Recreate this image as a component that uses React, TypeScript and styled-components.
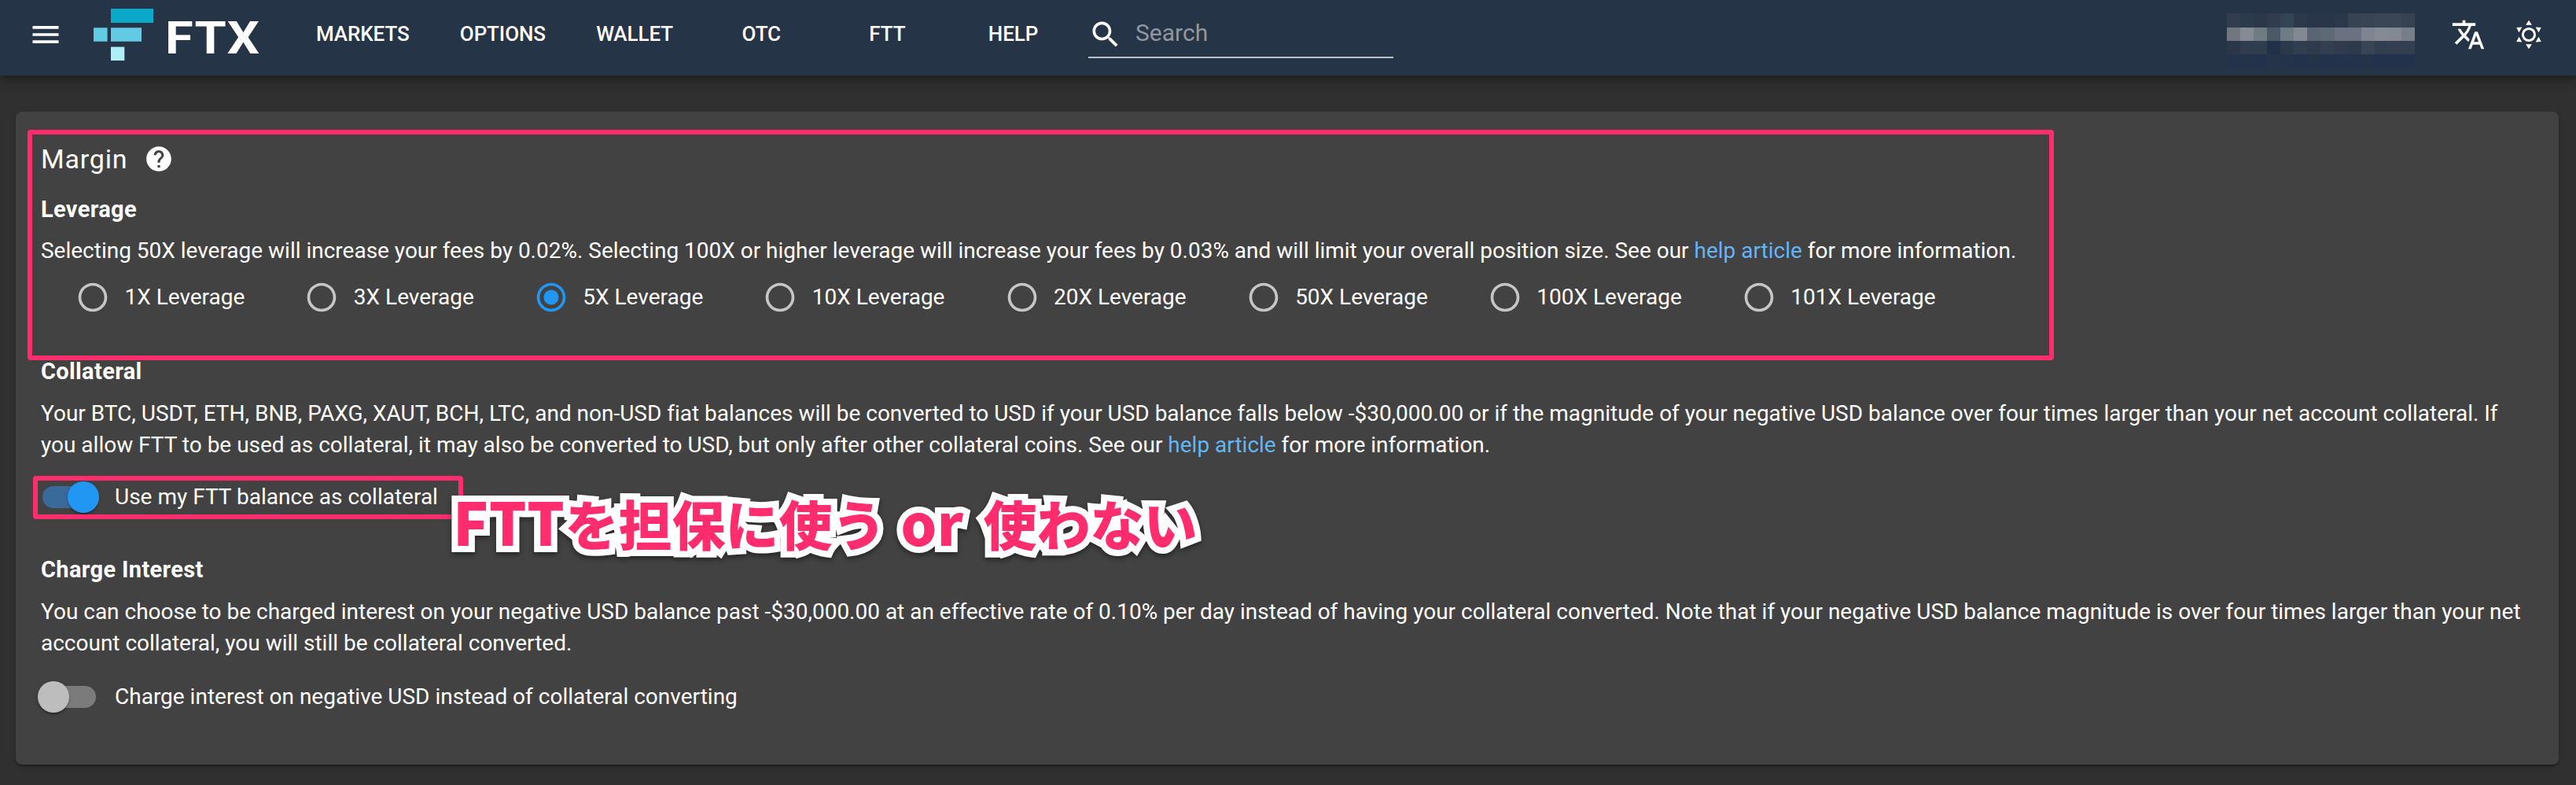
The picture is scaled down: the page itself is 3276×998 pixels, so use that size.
import React, { useState } from 'react';
import styled, { createGlobalStyle } from 'styled-components';

const GlobalStyle = createGlobalStyle`
  * {
    box-sizing: border-box;
  }

  body {
    margin: 0;
    background: #303030;
    color: #fff;
    font-family: Roboto, 'Noto Sans CJK JP', sans-serif;
    font-size: 28px;
    line-height: 40px;
  }
`;

const Page = styled.div`
  min-height: 998px;
  padding-bottom: 26px;
`;

/* ---------- header ---------- */

const Header = styled.header`
  display: flex;
  align-items: center;
  height: 96px;
  padding: 0 38px 8px 36px;
  background: #263447;
  box-shadow: 0 4px 8px -2px rgba(0, 0, 0, 0.2), 0 8px 10px rgba(0, 0, 0, 0.14),
    0 2px 20px rgba(0, 0, 0, 0.12);
`;

const Icon = styled.svg<{ $size?: number }>`
  flex: none;
  display: block;
  width: ${({ $size }) => $size || 44}px;
  height: ${({ $size }) => $size || 44}px;
  fill: currentColor;
`;

const Logo = styled.div`
  display: flex;
  align-items: center;
  margin: 0 56px 0 39px;
`;

const LogoMark = styled.svg`
  display: block;
  width: 76px;
  height: 66px;
`;

const LogoText = styled.div`
  width: 120px;
  margin: 9px 0 0 15px;
  font-size: 57px;
  font-weight: 700;
  line-height: 60px;
  letter-spacing: 1px;
  transform: scaleX(1.14);
  transform-origin: left;
`;

const Nav = styled.nav`
  display: flex;
  gap: 32.2px;
  margin-right: 31.5px;
`;

const NavItem = styled.a`
  min-width: 128px;
  padding: 0 16px 2px;
  text-align: center;
  font-size: 26px;
  font-weight: 500;
  letter-spacing: -0.1px;
`;

const Search = styled.label`
  display: flex;
  align-items: center;
  width: 388px;
  height: 58px;
  margin-top: 2px;
  border-bottom: 2px solid #bcc1c7;
`;

const SearchInput = styled.input`
  width: 300px;
  margin-left: 16px;
  padding: 0 0 5px;
  border: 0;
  outline: 0;
  background: none;
  color: #fff;
  font: 400 30px/40px Roboto, sans-serif;

  &::placeholder {
    color: #8f97a2;
    opacity: 1;
  }
`;

const HeaderRight = styled.div`
  display: flex;
  align-items: center;
  margin-left: auto;
`;

const ThemeToggle = styled(Icon)`
  margin-left: 33px;
`;

const Account = styled.div`
  display: grid;
  grid-template-columns: repeat(14, 1fr);
  grid-template-rows: 17.5px 17.2px 17.3px 16px;
  width: 239px;
  margin: 14px 46px 0 0;
`;

const Pixel = styled.i<{ $color: string }>`
  background: ${({ $color }) => $color};
`;

/* ---------- card ---------- */

const Card = styled.main`
  position: relative;
  height: 830px;
  margin: 46px 22px 0 20px;
  padding: 34px 32px 0;
  border-radius: 8px;
  background: #424242;
  box-shadow: 0 4px 2px -2px rgba(0, 0, 0, 0.2), 0 2px 2px rgba(0, 0, 0, 0.14),
    0 2px 6px rgba(0, 0, 0, 0.12);
`;

const Title = styled.h1`
  display: flex;
  align-items: center;
  gap: 21px;
  margin: 0 0 18px;
  font-size: 34px;
  font-weight: 400;
  line-height: 52px;
  letter-spacing: 0.8px;
`;

const Section = styled.section`
  & + & {
    margin-top: 52px;
  }
`;

const SectionTitle = styled.h2`
  margin: 0;
  font-size: 29px;
  font-weight: 700;
  line-height: 40px;
  letter-spacing: 0.35px;
`;

const Text = styled.p<{ $top?: number }>`
  margin: ${({ $top }) => $top || 14}px 0 0;
  letter-spacing: -0.008px;
`;

const Link = styled.a`
  color: #64b5f6;
`;

const RadioGroup = styled.div`
  display: flex;
  gap: 76.1px;
  margin: 17px 0 0 44px;
`;

const RadioLabel = styled.label`
  display: flex;
  align-items: center;
  gap: 18.4px;
  height: 44px;
  white-space: nowrap;
`;

const RadioIcon = styled(Icon)<{ $checked: boolean }>`
  color: ${({ $checked }) => ($checked ? '#2196f3' : '#c6c6c6')};
`;

const SwitchRow = styled.div<{ $top: number }>`
  display: flex;
  align-items: center;
  height: 40px;
  margin: ${({ $top }) => $top}px 0 0 -4px;
`;

const SwitchTrack = styled.button<{ $on: boolean }>`
  display: flex;
  align-items: center;
  justify-content: ${({ $on }) => ($on ? 'flex-end' : 'flex-start')};
  width: 68px;
  height: 28px;
  margin: 0 24px 0 6px;
  padding: 0;
  border: 0;
  border-radius: 14px;
  background: ${({ $on }) => ($on ? '#3a6a9a' : '#7b7b7b')};
`;

const SwitchThumb = styled.span<{ $on: boolean }>`
  flex: none;
  width: 40px;
  height: 40px;
  margin: 0 ${({ $on }) => ($on ? '-4px' : '0')} 0 ${({ $on }) => ($on ? '0' : '-6px')};
  border-radius: 50%;
  background: ${({ $on }) => ($on ? '#2196f3' : '#bdbdbd')};
  box-shadow: 0 4px 2px -2px rgba(0, 0, 0, 0.2), 0 2px 2px rgba(0, 0, 0, 0.14),
    0 2px 6px rgba(0, 0, 0, 0.12);
`;

/* ---------- annotations on top of the card ---------- */

const Frame = styled.div<{ $x: number; $y: number; $w: number; $h: number }>`
  position: absolute;
  left: ${({ $x }) => $x}px;
  top: ${({ $y }) => $y}px;
  width: ${({ $w }) => $w}px;
  height: ${({ $h }) => $h}px;
  border: 6.5px solid #ff2d6e;
  border-radius: 4px;
  pointer-events: none;
`;

const Note = styled.div`
  position: absolute;
  left: 556px;
  top: 469.5px;
  color: #ff2d6e;
  font-family: 'Noto Sans CJK JP', sans-serif;
  font-size: 68px;
  font-weight: 900;
  line-height: 100px;
  white-space: pre;
  -webkit-text-stroke: 16px #fff;
  paint-order: stroke fill;
  filter: drop-shadow(0 3px 3px rgba(0, 0, 0, 0.45));
`;

const NoteLatin = styled.span<{ $size: number }>`
  font-size: ${({ $size }) => $size}px;
  letter-spacing: 0.4px;
`;

const NoteOr = styled(NoteLatin)`
  padding: 0 8px 0 2px;
`;

const navItems = ['MARKETS', 'OPTIONS', 'WALLET', 'OTC', 'FTT', 'HELP'];
const leverages = ['1X', '3X', '5X', '10X', '20X', '50X', '100X', '101X'];

// blurred account name
const accountPixels = [
  '#323e50 #2b3b4c #2b384a #313d4f #334555 #2c394b #293649 #293649 #2b384a #374353 #384454 #3a4656 #3a4656 #364252',
  '#707780 #868a94 #707c84 #4b5967 #707c85 #838992 #5b6473 #5e6976 #6b7180 #6b7180 #808490 #868a95 #838892 #767e89',
  '#2a3748 #303d4e #303d4e #233148 #2c394a #313e4f #303a4d #333e50 #303c4e #2e3a4c #384555 #313e50 #333f50 #333f50',
  '#22334b #22334b #22324c #253448 #23334a #22324c #23334a #22324c #23334b #23334b #243348 #22324c #22324c #22324c',
]
  .join(' ')
  .split(' ');

const sunRays = [0, 60, 120, 180, 240, 300];

const Radio = ({ checked }: { checked: boolean }) => (
  <RadioIcon viewBox="0 0 24 24" $checked={checked}>
    <path d="M12 2C6.48 2 2 6.48 2 12s4.48 10 10 10 10-4.48 10-10S17.52 2 12 2zm0 18c-4.42 0-8-3.58-8-8s3.58-8 8-8 8 3.58 8 8-3.58 8-8 8z" />
    {checked && <circle cx="12" cy="12" r="5.2" />}
  </RadioIcon>
);

type SwitchProps = { label: string; initial: boolean; top: number };

const Switch = ({ label, initial, top }: SwitchProps) => {
  const [on, setOn] = useState(initial);

  return (
    <SwitchRow $top={top}>
      <SwitchTrack $on={on} onClick={() => setOn(!on)} aria-label={label}>
        <SwitchThumb $on={on} />
      </SwitchTrack>
      <span>{label}</span>
    </SwitchRow>
  );
};

const App = () => {
  const [leverage, setLeverage] = useState('5X');

  return (
    <Page>
      <GlobalStyle />
      <Header>
        <Icon viewBox="0 0 24 24">
          <path d="M3 18h18v-2H3v2zm0-5h18v-2H3v2zm0-7v2h18V6H3z" />
        </Icon>
        <Logo>
          <LogoMark viewBox="0 0 76 66">
            <path fill="#0ba8c9" d="M22 0h54v18H22z" />
            <path fill="#60cbe2" d="M0 24.3h17.6v17.5H0zM22 24.3h39v17.5H22z" />
            <path fill="#adeef9" d="M22 48.6h17.3V66H22z" />
          </LogoMark>
          <LogoText>FTX</LogoText>
        </Logo>
        <Nav>
          {navItems.map(item => (
            <NavItem key={item}>{item}</NavItem>
          ))}
        </Nav>
        <Search>
          <Icon viewBox="0 0 24 24">
            <path d="M15.5 14h-.79l-.28-.27C15.41 12.59 16 11.11 16 9.5 16 5.91 13.09 3 9.5 3S3 5.91 3 9.5 5.91 16 9.5 16c1.61 0 3.09-.59 4.23-1.57l.27.28v.79l5 4.99L20.49 19l-4.99-5zm-6 0C7.01 14 5 11.99 5 9.5S7.01 5 9.5 5 14 7.01 14 9.5 11.99 14 9.5 14z" />
          </Icon>
          <SearchInput placeholder="Search" />
        </Search>
        <HeaderRight>
          <Account>
            {accountPixels.map((color, i) => (
              <Pixel key={i} $color={color} />
            ))}
          </Account>
          <Icon viewBox="0 0 24 24">
            <path d="M12.87 15.07l-2.54-2.51.03-.03c1.74-1.94 2.98-4.17 3.71-6.53H17V4h-7V2H8v2H1v1.99h11.17C11.5 7.92 10.44 9.75 9 11.35 8.07 10.32 7.3 9.19 6.69 8h-2c.73 1.63 1.73 3.17 2.98 4.56l-5.09 5.02L4 19l5-5 3.11 3.11.76-2.04zM18.5 10h-2L12 22h2l1.12-3h4.75L21 22h2l-4.5-12zm-2.62 7l1.62-4.33L19.12 17h-3.24z" />
          </Icon>
          <ThemeToggle viewBox="-22 -22 44 44">
            <circle r="7.6" fill="none" stroke="currentColor" strokeWidth="3" />
            {sunRays.map(angle => (
              <path key={angle} d="M0-18.2l3.9 6h-7.8z" transform={`rotate(${angle})`} />
            ))}
          </ThemeToggle>
        </HeaderRight>
      </Header>

      <Card>
        <Title>
          Margin
          <Icon viewBox="0 0 24 24" $size={38}>
            <path d="M12 2C6.48 2 2 6.48 2 12s4.48 10 10 10 10-4.48 10-10S17.52 2 12 2zm1 17h-2v-2h2v2zm2.07-7.75l-.9.92C13.45 12.9 13 13.5 13 15h-2v-.5c0-1.1.45-2.1 1.17-2.83l1.24-1.26c.37-.36.59-.86.59-1.41 0-1.1-.9-2-2-2s-2 .9-2 2H8c0-2.21 1.79-4 4-4s4 1.79 4 4c0 .88-.36 1.68-.93 2.25z" />
          </Icon>
        </Title>
        <Section>
          <SectionTitle>Leverage</SectionTitle>
          <Text $top={13}>
            Selecting 50X leverage will increase your fees by 0.02%. Selecting 100X or higher
            leverage will increase your fees by 0.03% and will limit your overall position size. See
            our <Link>help article</Link> for more information.
          </Text>
          <RadioGroup>
            {leverages.map(value => (
              <RadioLabel key={value} onClick={() => setLeverage(value)}>
                <Radio checked={value === leverage} />
                {value} Leverage
              </RadioLabel>
            ))}
          </RadioGroup>
        </Section>
        <Section>
          <SectionTitle>Collateral</SectionTitle>
          <Text>
            Your BTC, USDT, ETH, BNB, PAXG, XAUT, BCH, LTC, and non-USD fiat balances will be
            converted to USD if your USD balance falls below -$30,000.00 or if the magnitude of your
            negative USD balance over four times larger than your net account collateral. If you
            allow FTT to be used as collateral, it may also be converted to USD, but only after
            other collateral coins. See our <Link>help article</Link> for more information.
          </Text>
          <Switch label="Use my FTT balance as collateral" initial top={26} />
        </Section>
        <Section>
          <SectionTitle>Charge Interest</SectionTitle>
          <Text>
            You can choose to be charged interest on your negative USD balance past -$30,000.00 at
            an effective rate of 0.10% per day instead of having your collateral converted. Note
            that if your negative USD balance magnitude is over four times larger than your net
            account collateral, you will still be collateral converted.
          </Text>
          <Switch
            label="Charge interest on negative USD instead of collateral converting"
            initial={false}
            top={28}
          />
        </Section>

        <Frame $x={15} $y={23} $w={2577} $h={293} />
        <Frame $x={22} $y={462.5} $w={547} $h={55} />
        <Note>
          <NoteLatin $size={75}>FTT</NoteLatin>を担保に使う<NoteOr $size={72}> or </NoteOr>使わない
        </Note>
      </Card>
    </Page>
  );
};

export default App;
